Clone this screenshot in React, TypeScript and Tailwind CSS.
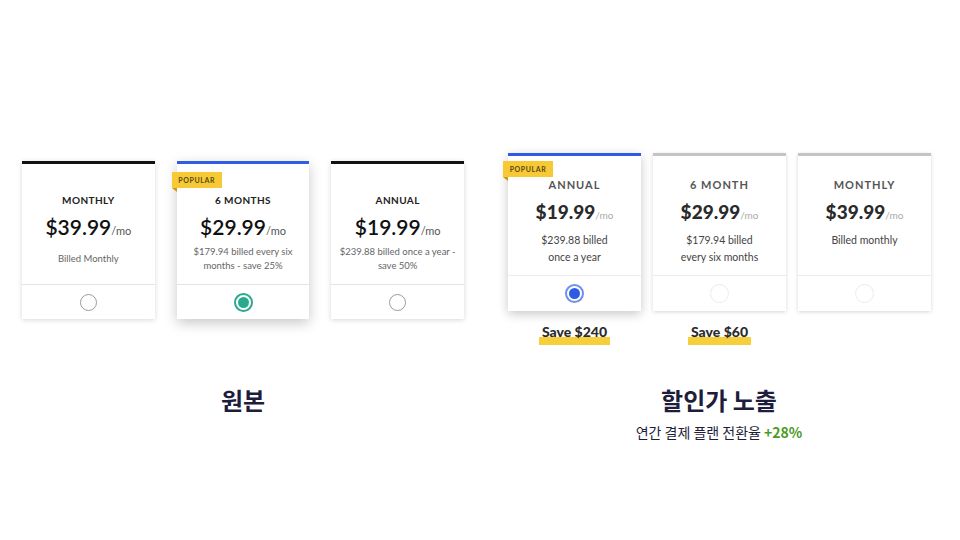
import React from "react";

type Plan = {
  name: string;
  price: string;
  billed: React.ReactNode;
  popular?: boolean;
  selected?: boolean;
};

const originalPlans: Plan[] = [
  { name: "MONTHLY", price: "$39.99", billed: "Billed Monthly" },
  {
    name: "6 MONTHS",
    price: "$29.99",
    billed: (
      <>
        $179.94 billed every six
        <br />
        months - save 25%
      </>
    ),
    popular: true,
    selected: true,
  },
  {
    name: "ANNUAL",
    price: "$19.99",
    billed: (
      <>
        $239.88 billed once a year -
        <br />
        save 50%
      </>
    ),
  },
];

const discountPlans: (Plan & { save?: string })[] = [
  {
    name: "ANNUAL",
    price: "$19.99",
    billed: (
      <>
        $239.88 billed
        <br />
        once a year
      </>
    ),
    popular: true,
    selected: true,
    save: "Save $240",
  },
  {
    name: "6 MONTH",
    price: "$29.99",
    billed: (
      <>
        $179.94 billed
        <br />
        every six months
      </>
    ),
    save: "Save $60",
  },
  { name: "MONTHLY", price: "$39.99", billed: "Billed monthly" },
];

const Badge = ({ className }: { className: string }) => (
  <div className={`absolute ${className}`}>
    <div className="h-[16px] w-[50px] bg-[#f7c935] flex items-center justify-center text-[7px] font-bold tracking-[0.6px] text-[#5b4a14]">
      POPULAR
    </div>
    <div className="w-0 h-0 border-t-[4px] border-t-[#c99a12] border-l-[5px] border-l-transparent" />
  </div>
);

const OriginalCard = ({ plan }: { plan: Plan }) => (
  <div
    className={`relative w-[133px] bg-white border-t-[3px] ${
      plan.selected
        ? "border-t-[#2f5de6] shadow-[0_4px_12px_rgba(0,0,0,0.22)]"
        : "border-t-[#111] shadow-[0_1px_5px_rgba(0,0,0,0.16)]"
    }`}
  >
    {plan.popular && <Badge className="left-[-5px] top-[8px]" />}
    <div className="h-[120px] flex flex-col items-center pt-[29px]">
      <div className="h-[14px] leading-[14px] text-[10px] font-bold tracking-[0.4px] text-[#222]">
        {plan.name}
      </div>
      <div className="mt-[7px] h-[26px] flex items-baseline text-[#111]">
        <span className="text-[21px] leading-[26px] font-semibold">{plan.price}</span>
        <span className="text-[11px] text-[#555]">/mo</span>
      </div>
      <div className="mt-[3px] h-[32px] flex items-center text-center text-[9.5px] leading-[14px] text-[#666]">
        <div>{plan.billed}</div>
      </div>
    </div>
    <div className="h-[35px] border-t border-[#e3e3e3] flex items-center justify-center">
      {plan.selected ? (
        <div className="w-[19px] h-[19px] rounded-full border-[2px] border-[#2aa98c] flex items-center justify-center">
          <div className="w-[11px] h-[11px] rounded-full bg-[#2aa98c]" />
        </div>
      ) : (
        <div className="w-[17px] h-[17px] rounded-full border border-[#9a9a9a]" />
      )}
    </div>
  </div>
);

const DiscountCard = ({ plan }: { plan: Plan & { save?: string } }) => (
  <div className="flex flex-col items-center">
    <div
      className={`relative w-[133px] bg-white border-t-[3px] ${
        plan.selected
          ? "border-t-[#2d5be3] shadow-[0_3px_10px_rgba(0,0,0,0.22)]"
          : "border-t-[#c4c4c4] shadow-[0_1px_4px_rgba(0,0,0,0.16)]"
      }`}
    >
      {plan.popular && <Badge className="left-[-5px] top-[5px]" />}
      <div className="h-[119px] flex flex-col items-center pt-[22px]">
        <div className="h-[14px] leading-[14px] text-[11px] font-bold tracking-[1px] text-[#555]">
          {plan.name}
        </div>
        <div className="mt-[8px] h-[24px] flex items-baseline">
          <span className="text-[19px] leading-[24px] font-black text-[#2a2a2a]">{plan.price}</span>
          <span className="text-[10px] text-[#aaa]">/mo</span>
        </div>
        <div className="mt-[8px] text-center text-[10.5px] leading-[17px] text-[#444]">
          {plan.billed}
        </div>
      </div>
      <div className="h-[36px] border-t border-[#ececec] flex items-center justify-center">
        {plan.selected ? (
          <div className="w-[19px] h-[19px] rounded-full border-[2px] border-[#6e8ff0] flex items-center justify-center">
            <div className="w-[11px] h-[11px] rounded-full bg-[#2d5be3]" />
          </div>
        ) : (
          <div className="w-[19px] h-[19px] rounded-full border border-[#ececec]" />
        )}
      </div>
    </div>
    {plan.save && (
      <div className="relative mt-[8px] px-[3px]">
        <div className="absolute left-0 right-0 bottom-[-2px] h-[8px] bg-[#f7cf3a]" />
        <span className="relative text-[14px] font-black text-[#2b2b2b] leading-[17px]">
          {plan.save}
        </span>
      </div>
    )}
  </div>
);

export default function App() {
  return (
    <div
      className="w-[960px] h-[540px] bg-white overflow-hidden pt-[153px] px-[22px]"
      style={{ fontFamily: "Lato, 'Noto Sans CJK KR', sans-serif" }}
    >
      <div className="flex gap-[44px]">
        <div className="w-[442px] flex flex-col items-center">
          <div className="h-[222px] w-full pt-[8px] flex items-start gap-[22px]">
            {originalPlans.map((p) => (
              <OriginalCard key={p.name} plan={p} />
            ))}
          </div>
          <div
            className="pt-[9px] text-[24px] leading-[32px] font-bold text-[#1e1d3b]"
            style={{ fontFamily: "'Noto Sans CJK KR', sans-serif" }}
          >
            원본
          </div>
        </div>
        <div className="w-[422px] flex flex-col items-center">
          <div className="h-[222px] w-full flex items-start gap-[12px]">
            {discountPlans.map((p) => (
              <DiscountCard key={p.name} plan={p} />
            ))}
          </div>
          <div
            className="pt-[9px] text-[24px] leading-[32px] font-bold text-[#1e1d3b]"
            style={{ fontFamily: "'Noto Sans CJK KR', sans-serif" }}
          >
            할인가 노출
          </div>
          <div
            className="mt-[6px] text-[14px] leading-[20px] text-[#1e1d3b]"
            style={{ fontFamily: "'Noto Sans CJK KR', sans-serif" }}
          >
            연간 결제 플랜 전환율 <span className="font-bold text-[#4b9a25]">+28%</span>
          </div>
        </div>
      </div>
    </div>
  );
}
